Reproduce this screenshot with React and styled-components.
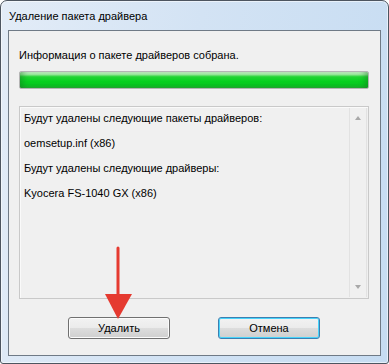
import React from 'react';
import styled, { createGlobalStyle } from 'styled-components';

const Global = createGlobalStyle`
  html, body { margin: 0; padding: 0; background: #ffffff; }
  body { font-family: 'Liberation Sans', Arial, sans-serif; }
`;

const Window = styled.div`
  position: relative;
  box-sizing: border-box;
  width: 389px;
  height: 364px;
  display: flex;
  flex-direction: column;
  border: 1px solid #4d5560;
  border-radius: 7px 7px 3px 3px;
  background: linear-gradient(100deg, #e3ecf7 0%, #d3e3f4 45%, #c6dcf2 100%);
  box-shadow: inset 0 0 0 1px rgba(255,255,255,0.55);
  overflow: hidden;
`;

const TitleBar = styled.div`
  height: 29px;
  padding-left: 8px;
  display: flex;
  align-items: center;
  font-size: 11px;
  color: #000;
`;

const Client = styled.div`
  flex: 1;
  margin: 0 7px 7px 7px;
  border: 1px solid #6f7a86;
  background: #f0f0f0;
  display: flex;
  flex-direction: column;
  padding: 16px 11px 16px 10px;
  min-height: 0;
`;

const Status = styled.div`
  font-size: 11px;
  line-height: 16px;
  color: #000;
`;

const Progress = styled.div`
  margin-top: 8px;
  height: 18px;
  box-sizing: border-box;
  border: 1px solid #b4b4b4;
  border-radius: 2px;
  background: linear-gradient(to bottom, #d4f7d4 0%, #a8eda8 14%, #22d433 30%, #06d01f 60%, #0bc322 85%, #24ad33 100%);
  box-shadow: inset 6px 0 6px -3px rgba(20,110,30,0.45), inset -6px 0 6px -3px rgba(20,110,30,0.45);
`;

const ListBox = styled.div`
  margin-top: 17px;
  flex: 1;
  display: flex;
  border: 1px solid #c9c9c9;
  box-shadow: inset 1px 1px 0 #fafafa;
  background: #f0f0f0;
  min-height: 0;
`;

const ListText = styled.div`
  flex: 1;
  padding: 2px 4px;
  font-size: 11px;
  color: #000;
`;

const Line = styled.div`
  height: 25px;
  line-height: 18px;
`;

const Scroll = styled.div`
  width: 16px;
  margin: 1px 1px 1px 0;
  border-left: 1px solid #e2e2e2;
  border-right: 1px solid #e2e2e2;
  background: #f0f0f0;
  display: flex;
  flex-direction: column;
  justify-content: space-between;
  align-items: center;
  padding: 8px 0;
`;

const Arrow = styled.div`
  width: 0;
  height: 0;
  border-left: 3.5px solid transparent;
  border-right: 3.5px solid transparent;
  ${p => p.$down
    ? 'border-top: 4px solid #a8a8a8;'
    : 'border-bottom: 4px solid #a8a8a8;'}
`;

const Buttons = styled.div`
  margin-top: 18px;
  display: flex;
  justify-content: center;
  gap: 48px;
`;

const Button = styled.button`
  width: 102px;
  height: 22px;
  padding: 0;
  font-family: 'Liberation Sans', Arial, sans-serif;
  font-size: 11px;
  color: #000;
  border-radius: 3px;
  border: 1px solid ${p => p.$default ? '#3c7fb1' : '#707070'};
  background: linear-gradient(to bottom, #f2f2f2 0%, #ebebeb 50%, #dddddd 51%, #cfcfcf 100%);
  box-shadow: inset 0 0 0 1px ${p => p.$default ? '#48d4fb' : '#fbfbfb'};
`;

const Pointer = styled.svg`
  position: absolute;
  left: 103px;
  top: 245px;
`;

export default function App() {
  return (
    <>
      <Global />
      <Window>
        <TitleBar>Удаление пакета драйвера</TitleBar>
        <Client>
          <Status>Информация о пакете драйверов собрана.</Status>
          <Progress />
          <ListBox>
            <ListText>
              <Line>Будут удалены следующие пакеты драйверов:</Line>
              <Line>oemsetup.inf (x86)</Line>
              <Line>Будут удалены следующие драйверы:</Line>
              <Line>Kyocera FS-1040 GX (x86)</Line>
            </ListText>
            <Scroll>
              <Arrow />
              <Arrow $down />
            </Scroll>
          </ListBox>
          <Buttons>
            <Button>Удалить</Button>
            <Button $default>Отмена</Button>
          </Buttons>
        </Client>
        <Pointer width="32" height="76" viewBox="0 0 32 76">
          <line x1="14" y1="2" x2="14" y2="52" stroke="#e53a30" strokeWidth="3" strokeLinecap="round" />
          <polygon points="1,48 28,48 14,73" fill="#e53a30" />
        </Pointer>
      </Window>
    </>
  );
}
